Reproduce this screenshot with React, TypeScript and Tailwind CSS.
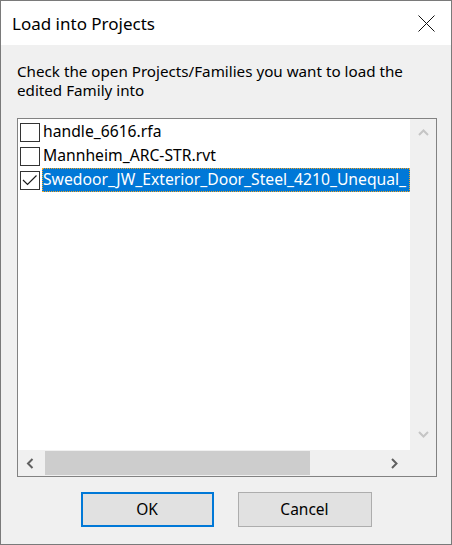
import React from 'react';

const items = [
  { name: 'handle_6616.rfa', checked: false },
  { name: 'Mannheim_ARC-STR.rvt', checked: false },
  { name: 'Swedoor_JW_Exterior_Door_Steel_4210_Unequal_', checked: true },
];

const Chevron: React.FC<{ dir: 'up' | 'down' | 'left' | 'right'; color: string }> = ({ dir, color }) => {
  const paths = {
    up: 'M1 7 L5.5 2.5 L10 7',
    down: 'M1 2 L5.5 6.5 L10 2',
    left: 'M6.5 1 L2 5.5 L6.5 10',
    right: 'M2 1 L6.5 5.5 L2 10',
  };
  return (
    <svg width="11" height="11" viewBox="0 0 11 11" fill="none">
      <path d={paths[dir]} stroke={color} strokeWidth="2" />
    </svg>
  );
};

const CheckBox: React.FC<{ checked: boolean }> = ({ checked }) => (
  <div className="w-[20px] h-[19px] border border-[#333333] bg-white flex items-center justify-center shrink-0">
    {checked && (
      <svg width="18" height="17" viewBox="0 0 18 17" fill="none">
        <path d="M2 8 L6.5 12.5 L15.5 3.5" stroke="#1a1a1a" strokeWidth="1.2" />
      </svg>
    )}
  </div>
);

export default function App() {
  return (
    <div
      className="w-[452px] h-[545px] border border-[#7a7a7a] flex flex-col bg-[#f0f0f0] text-black"
      style={{ fontFamily: '"Noto Sans", "Open Sans", sans-serif' }}
    >
      {/* title bar */}
      <div className="h-[44px] bg-white flex items-center justify-between pl-[11px] pr-[16px] shrink-0">
        <span className="text-[17px] leading-none">Load into Projects</span>
        <svg width="17" height="17" viewBox="0 0 17 17" fill="none">
          <path d="M0.5 0.5 L16.5 16.5 M16.5 0.5 L0.5 16.5" stroke="#111" strokeWidth="1" />
        </svg>
      </div>

      <div className="flex-1 flex flex-col pt-[17px]">
        <p className="px-[16px] text-[15.2px] leading-[19px]">
          Check the open Projects/Families you want to load the
          <br />
          edited Family into
        </p>

        {/* list box */}
        <div className="mt-[18px] ml-[16px] w-[420px] h-[359px] border border-[#828282] grid grid-cols-[392px_26px] grid-rows-[331px_26px]">
          <div className="bg-white overflow-hidden pt-[1px] pl-[2px]">
            {items.map((item) => (
              <div key={item.name} className="h-[24px] flex items-center">
                <CheckBox checked={item.checked} />
                <div
                  className={
                    item.checked
                      ? 'ml-[2px] h-[24px] flex-1 flex items-center bg-[#0078d7] text-white border border-dotted border-[#f5a623] whitespace-nowrap text-[15.7px]'
                      : 'ml-[2px] h-[24px] flex-1 flex items-center whitespace-nowrap text-[15.7px] pl-[1px]'
                  }
                >
                  {item.name}
                </div>
              </div>
            ))}
          </div>

          {/* vertical scrollbar */}
          <div className="bg-[#f0f0f0] flex flex-col justify-between items-center py-[9px]">
            <Chevron dir="up" color="#c5c5c5" />
            <Chevron dir="down" color="#c5c5c5" />
          </div>

          {/* horizontal scrollbar */}
          <div className="bg-[#f0f0f0] flex items-center">
            <div className="w-[27px] h-full flex items-center justify-center">
              <Chevron dir="left" color="#606060" />
            </div>
            <div className="w-[265px] h-[24px] bg-[#cdcdcd]"></div>
            <div className="flex-1 flex items-center justify-end pr-[9px]">
              <Chevron dir="right" color="#606060" />
            </div>
          </div>
          <div className="bg-[#f0f0f0]"></div>
        </div>

        {/* buttons */}
        <div className="mt-[15px] flex justify-center gap-[24px]">
          <button className="w-[133px] h-[35px] bg-[#e1e1e1] border-2 border-[#0078d7] text-[15.5px]">
            OK
          </button>
          <button className="w-[134px] h-[35px] bg-[#e1e1e1] border border-[#adadad] text-[15.5px]">
            Cancel
          </button>
        </div>
      </div>
    </div>
  );
}
